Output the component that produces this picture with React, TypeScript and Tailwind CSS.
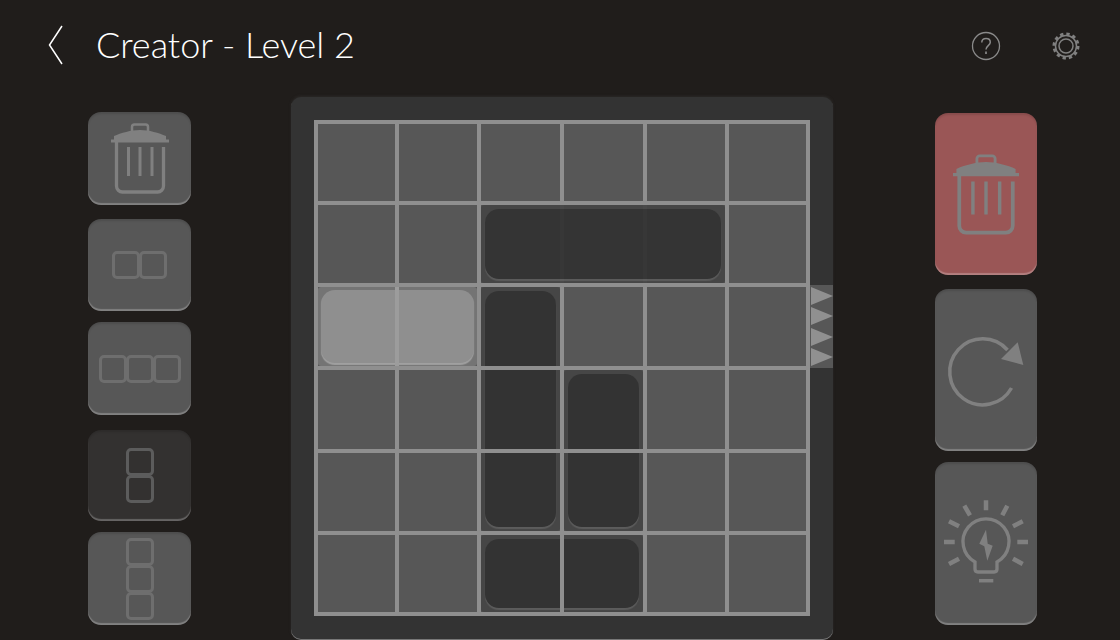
const columns = "grid-cols-[81px_82px_83px_83px_82px_81px] grid-rows-[81px_82px_83px_83px_82px_81px]";

function Square({ dim }: { dim?: boolean }) {
  return <div className={`size-[28px] shrink-0 -m-[0.5px] rounded-[5px] border-[3px] ${dim ? "border-[#5c5c5c]" : "border-[#6e6e6e]"}`} />;
}

function TrashIcon({ className }: { className: string }) {
  return (
    <svg className={className} viewBox="0 0 58 71" fill="none">
      <path d="M21 8V4a2.500 2.500 0 0 1 2.500-2.500h11A2.500 2.500 0 0 1 37 4v4" stroke="#808080" strokeWidth="2.500" />
      <path d="M0 16.500H3V13C10 10 20 7 29 7s19 3 26 6v3.500h3v3H0z" fill="#808080" />
      <path d="M5.500 18v45a6 6 0 0 0 6 6h35a6 6 0 0 0 6-6V24" stroke="#808080" strokeWidth="3.300" />
      <path d="M17.500 24v29M29 24v29M41 24v29" stroke="#808080" strokeWidth="3" />
    </svg>
  );
}

function ToolButton({ className, children }: { className: string; children: React.ReactNode }) {
  return (
    <div className={`flex items-center justify-center overflow-hidden rounded-[13px] shadow-[inset_0_2px_2px_rgba(0,0,0,0.12),inset_0_-2px_1px_rgba(255,255,255,0.25)] ${className}`}>
      {children}
    </div>
  );
}

function Piece({ className }: { className: string }) {
  return (
    <div className={`m-[2px] rounded-[3px] bg-[#464646] p-[4px] ${className}`}>
      <div className="size-full rounded-[14px] bg-[#333333] shadow-[0_2px_1px_#5c5c5c]" />
    </div>
  );
}

export default function App() {
  return (
    <div className="flex h-[640px] w-[1120px] flex-col overflow-hidden bg-[#201d1b] font-['Lato','Noto_Sans',sans-serif]">
      <header className="flex h-[97px] shrink-0 items-center pb-[5px] pl-[47px] pr-[39px]">
        <svg className="h-[42px] w-[16px]" viewBox="0 0 16 42" fill="none">
          <path d="M15 1 2.500 20 15 39" stroke="#ffffff" strokeWidth="1.500" />
        </svg>
        <h1 className="mb-[4px] ml-[33px] text-[36px] font-light leading-none text-white">Creator - Level 2</h1>
        <div className="ml-auto flex items-center gap-[50px]">
          <svg className="size-[30px]" viewBox="0 0 30 30" fill="none" stroke="#8a8a8a">
            <circle cx="15" cy="15" r="13.500" strokeWidth="1.300" />
            <path d="M10.800 11.500c0-2.500 1.900-4 4.300-4s4.200 1.500 4.200 3.700c0 3.400-4.300 3.500-4.300 7.300" strokeWidth="1.500" />
            <path d="M15 20.500v2.500" strokeWidth="1.700" />
          </svg>
          <svg className="size-[30px]" viewBox="0 0 30 30" fill="none" stroke="#808080">
            <circle cx="15" cy="15" r="12" strokeWidth="3" strokeDasharray="3.300 2.980" />
            <circle cx="15" cy="15" r="10.500" strokeWidth="1.500" />
            <circle cx="15" cy="15" r="7" strokeWidth="1.500" />
          </svg>
        </div>
      </header>

      <main className="flex min-h-0 flex-1">
        <div className="ml-[88px] mt-[15px] flex w-[103px] shrink-0 flex-col">
          <ToolButton className="h-[93px] bg-[#575757]">
            <TrashIcon className="h-[71px] w-[58px]" />
          </ToolButton>
          <ToolButton className="mt-[14px] h-[92px] bg-[#575757]">
            <div className="flex">
              <Square />
              <Square />
            </div>
          </ToolButton>
          <ToolButton className="mt-[11px] h-[93px] bg-[#575757]">
            <div className="flex">
              <Square />
              <Square />
              <Square />
            </div>
          </ToolButton>
          <ToolButton className="mt-[15px] h-[91px] bg-[#333130]">
            <div className="flex flex-col">
              <Square dim />
              <Square dim />
            </div>
          </ToolButton>
          <ToolButton className="mt-[11px] h-[93px] bg-[#575757]">
            <div className="flex flex-col">
              <Square />
              <Square />
              <Square />
            </div>
          </ToolButton>
        </div>

        <div className="ml-[100px] flex h-[543px] w-[542px] shrink-0 rounded-[10px] bg-[#333333] pl-[23px] pt-[23px] shadow-[0_-1px_3px_rgba(70,70,70,0.3),inset_0_-1px_0_#777777]">
          <div className="relative h-[496px] w-[496px] shrink-0 bg-[#575757]">
            <div className={`absolute inset-[2px] grid ${columns}`}>
              <Piece className="col-start-3 row-span-3 row-start-3" />
              <Piece className="col-start-4 row-span-2 row-start-4" />
              <Piece className="col-span-2 col-start-3 row-start-6" />
            </div>
            <div className={`absolute inset-[2px] grid ${columns}`}>
              {Array.from({ length: 36 }, (_, i) => (
                <div key={i} className="border-2 border-[#8f8f8f]" />
              ))}
            </div>
            <div className="absolute inset-0 border-2 border-[#8f8f8f]" />
            <div className={`absolute inset-[2px] grid ${columns}`}>
              <Piece className="col-span-3 col-start-3 row-start-2 opacity-95" />
              <div className="relative col-span-2 col-start-1 row-start-3 m-[2px] rounded-[3px] bg-[#747474] p-[3px]">
                <div className="size-full rounded-[14px] bg-[#8f8f8f] shadow-[0_2px_1px_#a0a0a0]" />
                <div className="absolute inset-y-0 left-[77px] w-[4px] bg-[#9c9c9c]" />
              </div>
            </div>
            {/* exit marker on the board edge */}
            <div className="absolute left-[496px] top-[165px] flex h-[83px] w-[23px] flex-col justify-between bg-[#575757] py-[2px] pl-px">
              {[0, 1, 2, 3].map((i) => (
                <svg key={i} className="h-[18px] w-[22px]" viewBox="0 0 22 18">
                  <path d="M0 0 22 9 0 18z" fill="#909090" />
                </svg>
              ))}
            </div>
          </div>
        </div>

        <div className="ml-[102px] mt-[16px] flex w-[102px] shrink-0 flex-col">
          <ToolButton className="h-[162px] bg-[#9a5656]">
            <TrashIcon className="h-[81px] w-[66px]" />
          </ToolButton>
          <ToolButton className="mt-[14px] h-[162px] bg-[#575757]">
            <svg className="ml-[-1px] h-[80px] w-[90px]" viewBox="0 0 90 80" fill="none">
              <path d="M70.500 58A33 33 0 1 1 66.500 20" stroke="#808080" strokeWidth="3.500" />
              <path d="M76.700 12.300 82.300 35 60 29z" fill="#808080" />
            </svg>
          </ToolButton>
          <ToolButton className="mt-[11px] h-[163px] bg-[#575757]">
            <svg className="mb-[2px] size-[90px]" viewBox="0 0 90 90" fill="none" stroke="#808080">
              <path d="M34 64a23 23 0 1 1 22 0c0 2 0 3 0 7q0 3-3 3H37q-3 0-3-3c0-4 0-5 0-7z" strokeWidth="3.300" />
              <path d="M38 82.700h14.300" strokeWidth="3.500" />
              <path d="M45 2.300v10M23.300 7.700l5.700 9.600M66.300 7.700l-5 9.600M8 23.300l10 5M81.700 23.300l-9.700 5M3 44h10.700M87 44H76.300M8 66l10-5.300M81.700 66l-9.700-5.300" strokeWidth="4.500" />
              <path d="M45 31.700 38.300 45.700 43.300 48.300 46.300 62.700 51.700 47.700 46.700 45.700z" fill="#808080" stroke="none" />
            </svg>
          </ToolButton>
        </div>
      </main>
    </div>
  );
}
